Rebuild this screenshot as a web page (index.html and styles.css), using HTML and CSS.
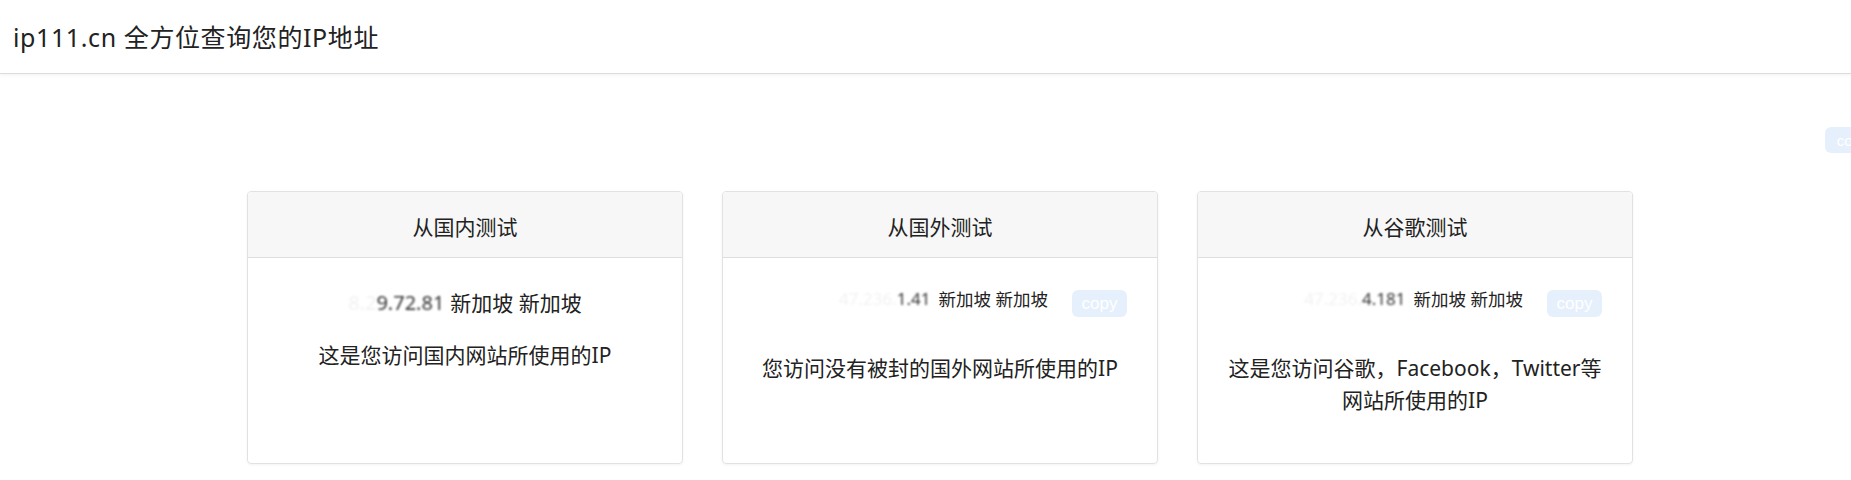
FILE: index.html
```html
<!DOCTYPE html>
<html lang="zh-CN">
<head>
<meta charset="utf-8">
<title>ip111.cn 全方位查询您的IP地址</title>
<link rel="stylesheet" href="styles.css">
</head>
<body>
<header class="topbar">
  <div class="brand">ip111.cn 全方位查询您的IP地址</div>
</header>
<button class="copy copy-float">copy</button>
<main class="cards">
  <section class="card">
    <div class="card-head">从国内测试</div>
    <div class="card-body">
      <div class="ip-row ip-row-center">
        <span class="ip ip-big"><span class="ip-faint">8.2</span><span class="ip-dark">9.72.81</span></span>
        <span class="loc">新加坡 新加坡</span>
      </div>
      <p class="desc desc-one">这是您访问国内网站所使用的IP</p>
    </div>
  </section>
  <section class="card">
    <div class="card-head">从国外测试</div>
    <div class="card-body">
      <div class="ip-row ip-row-end">
        <span class="ip"><span class="ip-faint">47.236.</span><span class="ip-dark">1.41</span></span>
        <span class="loc loc-small">新加坡 新加坡</span>
        <button class="copy copy-card">copy</button>
      </div>
      <p class="desc desc-two">您访问没有被封的国外网站所使用的IP</p>
    </div>
  </section>
  <section class="card">
    <div class="card-head">从谷歌测试</div>
    <div class="card-body">
      <div class="ip-row ip-row-end">
        <span class="ip"><span class="ip-faint">47.236.</span><span class="ip-dark">4.181</span></span>
        <span class="loc loc-small">新加坡 新加坡</span>
        <button class="copy copy-card">copy</button>
      </div>
      <p class="desc desc-two">这是您访问谷歌，Facebook，Twitter等<br>网站所使用的IP</p>
    </div>
  </section>
</main>
</body>
</html>
```

FILE: styles.css
```css
html, body {
  margin: 0;
  padding: 0;
}
body {
  background: #ffffff;
  color: #212529;
  font-family: "Noto Sans", "Noto Sans CJK SC", sans-serif;
  position: relative;
  overflow-x: hidden;
  min-height: 480px;
}
.topbar {
  height: 74px;
  border-bottom: 1px solid #dcdcdc;
  box-shadow: 0 1px 4px rgba(0, 0, 0, 0.06);
  display: flex;
  align-items: center;
  padding-left: 13px;
  box-sizing: border-box;
}
.brand {
  font-size: 25px;
  letter-spacing: 0.6px;
  line-height: 32px;
  color: #222;
  margin-top: 1px;
}
.copy {
  border: none;
  background: #e6f0fc;
  color: #ffffff;
  font-family: "Liberation Sans", sans-serif;
  font-size: 17px;
  border-radius: 6px;
  padding: 0;
  cursor: pointer;
}
.copy-float {
  position: absolute;
  left: 1825px;
  top: 127px;
  width: 55px;
  height: 26px;
  font-size: 15px;
}
.cards {
  display: flex;
  gap: 39px;
  padding-left: 247px;
  margin-top: 117px;
}
.card {
  width: 436px;
  height: 273px;
  box-sizing: border-box;
  border: 1px solid #e2e2e2;
  border-radius: 4px;
  box-shadow: 0 1px 3px rgba(0, 0, 0, 0.05);
  overflow: hidden;
  display: flex;
  flex-direction: column;
}
.card-head {
  height: 66px;
  flex: none;
  border-bottom: 1px solid #dedede;
  background: #f7f7f7;
  font-size: 21px;
  display: flex;
  align-items: center;
  justify-content: center;
  padding-top: 2px;
  box-sizing: border-box;
  color: #222;
}
.card-body {
  flex: 1;
  padding: 0 20px;
}
.ip-row {
  display: flex;
  align-items: flex-start;
  height: 30px;
}
.ip-row-center {
  justify-content: center;
  margin-top: 31px;
  height: 28px;
}
.ip-row-end {
  justify-content: flex-end;
  margin-top: 29px;
  padding-right: 10px;
}
.ip {
  font-size: 17px;
  line-height: 24px;
  margin-right: 8px;
  filter: blur(1.1px);
}
.ip-big {
  font-size: 20px;
  line-height: 28px;
  margin-right: 6px;
}
.ip-faint {
  color: #f2f2f2;
}
.ip-dark {
  color: #333;
}
.loc {
  font-size: 21px;
  line-height: 28px;
  color: #222;
}
.loc-small {
  font-size: 17.5px;
  line-height: 24px;
}
.copy-card {
  width: 55px;
  height: 27px;
  margin-top: 3px;
  margin-left: 24px;
}
.desc {
  margin: 0;
  text-align: center;
  font-size: 21px;
  line-height: 32px;
  color: #222;
}
.desc-one {
  margin-top: 22px;
}
.desc-two {
  margin-top: 35px;
}
```
